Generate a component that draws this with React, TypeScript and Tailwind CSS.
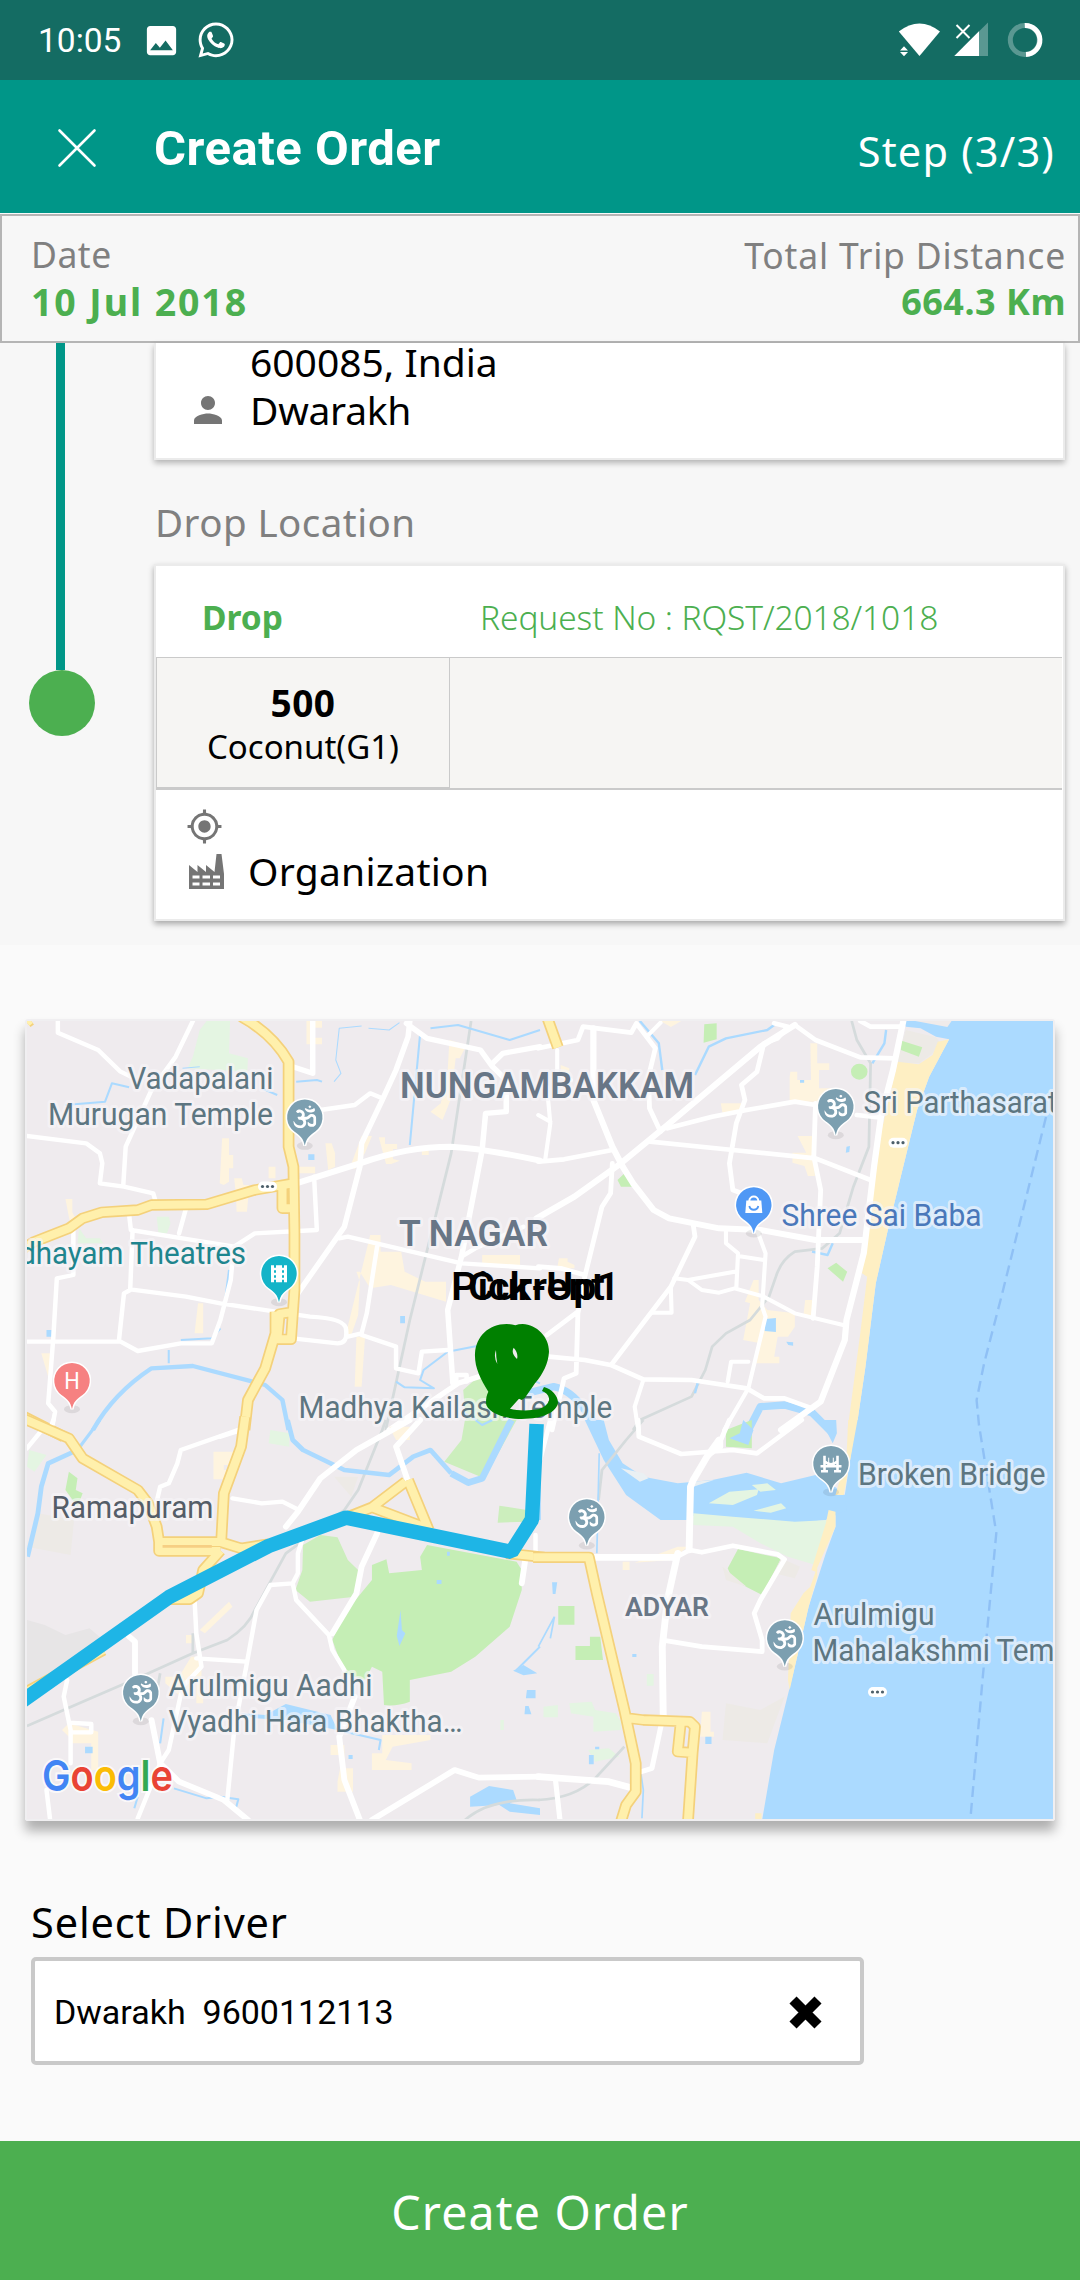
import { ReactNode } from "react";
import { FaOm, FaWhatsapp } from "react-icons/fa";
import { MdImage, MdMyLocation, MdPerson } from "react-icons/md";

type Shape = { d: string; fill: string };
type Line = { d: string; w: number };
type Tile = {
  transform: string;
  areas: Shape[];
  water: Line[];
  rail: string[];
  roads: Line[];
  highways: string[];
  lane?: string;
};

const GREEN = "#c5eeb5";
const MEADOW = "#e4f5e2";
const BLOCK = "#fef4df";
const WATER = "#abdaff";
const SAND = "#feefc3";
const STONE = "#edeae6";

const northWest: Tile = {
  transform: "translate(0 1000) scale(.34439 .33333)",
  areas: [
    { fill: MEADOW, d: "M600 63L668 63L665 160L720 175L718 215L545 205L560 170L580 90ZM455 650h35l5 20-10 30h-25zM230 685l20 30h40l10 15h-75z" },
    { fill: BLOCK, d: "M645 415h20v50h12v40h-12v40l-15 10-12-5zM680 535h22l5 20h15v25l-5 55h-30l-2-50zM780 500h20v35h-20zM890 63h45v20h-25v30h25v20h-45zM945 430h18l10 30v40l-20 10zM1050 408h30l-20 50-30 50-12-10zM1100 412h18v20h35v15h-12v30l20 5-25 10h-15zM1225 445h20v20h-20zM1305 120l50 15-20 40h-12l-13 120-25 65-35-25 30-25 20-100zM1075 705h30v50h60l10 60 60 30 60 0v60l-160-50-60 10-30-50h-10l10 30-5 100-20 60-15-5zM190 597h20v40l10 20-15 20zM575 910h15v90h-25zM120 1060h30v50l-10 20zM1035 1010h25l-10 150h-20zM865 500h50v20h-50zM1400 765h110v30h-110z" },
    { fill: WATER, d: "M895 463h18v17h-18zM1162 948h14v22h-14zM135 990h15v20h-15z" },
    { fill: "#cceebd", d: "M1345 1170L1400 1120L1440 1200L1480 1230L1440 1290H1355Z" },
  ],
  water: [
    { w: 13, d: "M270 1290Q330 1180 440 1105L560 1098L770 1155L820 1200L838 1290" },
    { w: 6, d: "M490 1050V1090M525 1020L615 1015L640 985M665 810L655 890M190 315L305 305L325 250L375 262M760 265L805 285M860 245L920 240L935 245M1220 100L1190 435M1250 85L1330 75L1480 120L1568 90M1150 1145L1175 1162L1260 1165L1220 1140L1230 1110L1300 1055L1400 1035M1440 1200L1520 1130L1568 1150M1350 1240L1400 1270L1440 1260" },
    { w: 3, d: "M1050 78L985 85L975 180L990 220L970 245M1070 85L1130 90L1160 68M530 205L580 200" },
  ],
  rail: ["M1368 63L1310 460L1190 960L1120 1290"],
  roads: [
    { w: 13, d: "M168 63V98L285 150L350 215L380 230M560 63L510 170L440 270L365 440L358 555M78 408L250 430L290 460L297 490L290 550L360 560L445 580L452 605M540 625L520 700M375 645L380 690L530 715L680 740L740 700L920 690L912 530M385 690L378 870L360 880L345 1025M378 868L540 890L640 910L800 935L900 950Q1005 955 1005 990Q1010 1030 980 1030L850 1015M678 745L670 840L640 960L615 1030L525 1030L400 1053L350 1025L78 1025M213 690L213 825L165 835L155 1010L140 1210L160 1235L150 1290M930 330L1030 315L1075 280L1110 295M985 715L1010 710L1340 790L1568 805M1095 740L1065 940L1050 1000L1010 1010M1050 1005L1150 1040L1150 1105L1215 1120L1225 1055L1300 1050M1325 1145v-20h30v20M1340 770L1380 745L1520 680M715 1285L640 1310" },
    { w: 16, d: "M908 63V220L850 200M1190 63L1185 110L1150 210L1110 300L1050 430L1045 500L1000 680L865 880M1180 70L1240 115L1395 150L1430 200L1470 240L1470 335L1410 340L1400 450L1340 770L1300 930L1315 1150M1430 190L1460 160L1568 140M1130 1290L1330 1150L1390 1130" },
    { w: 18, d: "M860 550L1045 490Q1180 440 1310 440Q1400 445 1568 482" },
  ],
  highways: [
    "M700 50Q790 100 838 185L838 440L852 500L855 700L855 870L845 1018H805L812 942L855 935M800 935V1000L770 1105L720 1200L710 1290M60 750L100 725L200 685L240 655L295 637L400 630L440 615L600 613L740 570L850 550M820 560V625H850M60 1245L185 1310M78 68l10-8",
  ],
};

const northEast: Tile = {
  transform: "translate(540 1000) scale(.34439 .33333)",
  areas: [
    { fill: WATER, d: "M1055 63H1500V1290H918L945 1100L975 850L1010 690L1050 520L1095 330L1130 230L1188 118L1150 110L1105 85L1062 80Z" },
    { fill: "#f0ebea", d: "M1090 63H1195L1183 81Z" },
    { fill: STONE, d: "M1062 90L1150 112L1160 125L1140 160L1100 190L1035 190Z" },
    { fill: SAND, d: "M1188 118L1130 230L1095 330L1050 520L1010 690L975 850L945 1100L918 1290H893L930 1000L950 830L935 820L990 400L1038 185L1100 193L1140 165L1155 125Z" },
    { fill: GREEN, d: "M477 73L513 70V118L475 128ZM903 215a24 24 0 1 0 48 0a24 24 0 1 0 -48 0ZM1050 122L1110 142L1100 170L1048 150ZM225 540L250 515L275 560L235 560ZM835 805L860 788L892 815L880 845Z" },
    { fill: BLOCK, d: "M785 130h20v60h35v20h-30v55h45v20l-30 20h-100v-75l2-15h20v25h40zM525 310h60v25l-55 5zM748 408h50v120h-20l-10-30-35-10v-30h40zM620 840h15v60l25 30 80 10v40l-20 30h-30l-10 60h15v20h-75l20-60-50-10 20-110-15-5zM770 900h20v45h-25zM55 775h25v10l20 10v10h-50zM350 63h60l-30 18zM60 195l25 10v20h-25z" },
    { fill: WATER, d: "M655 957l30 -3v42l-33-3zM715 1025l20 2v10l-14-2zM890 440l10-2-2 18-10 2zM755 240h12v8h-12z" },
  ],
  water: [
    { w: 7, d: "M290 63L345 130L355 210M450 225L490 140L540 115L660 90L680 75M1005 90L1000 130L965 190M850 730L835 765L790 755M460 1140l-10 40" },
    { w: 22, d: "M-40 1180L40 1160Q90 1170 130 1230L180 1300M600 1300L640 1220L710 1215L790 1238L850 1300" },
  ],
  rail: ["M905 63L920 120L960 190L955 440L910 560L870 700L820 745L740 755Q700 780 685 830L665 890L610 960L540 1000L500 1040L480 1110L440 1190L290 1260L270 1290"],
  roads: [
    { w: 18, d: "M-10 655L100 590L235 490L370 375L640 140L740 75M1055 63L1025 210L990 350L970 500L940 760L890 960L885 1020L815 1205L700 1290M155 85V300L210 440L240 500L270 550L330 630L375 655L520 685L640 690L800 720L940 720" },
    { w: 14, d: "M-5 145L110 120L125 80L265 98L280 70L335 145L315 230L318 325L350 395M-5 485L70 478L210 450M320 425L560 450L800 475L960 540M370 385L500 350L600 330L740 305L800 315M680 70L720 80L690 115L650 130L630 215L585 255L595 300L570 370L550 490L560 570L600 585M740 75L800 120L930 172L1030 175M930 63L960 80L1050 80M800 310L795 470L815 570L805 800L793 955M920 345L985 352M445 675L450 710L380 860L210 1090M210 490L205 580L180 620L130 830L110 940L105 1120L70 1135L35 1290M-5 800L60 805L130 825M20 1005L110 935M25 1070L130 1080L205 1095L300 1138L440 1140L600 1165L650 1195L710 1195L790 1225" },
    { w: 12, d: "M630 690L655 760L645 920L655 950L605 1165L535 1290M540 690V730L575 760L570 865M575 768L650 780M390 835L430 840L565 815M430 840L470 870L520 878L565 865L650 890L740 940L880 975M380 865L382 938H325M300 1140L275 1220L285 1290M545 1145L555 1085H605M50 150V220L90 240M20 260L30 370L15 480M-5 345L30 365M310 110L350 68" },
  ],
  highways: ["M20 50L52 142"],
};

const southWest: Tile = {
  transform: "translate(0 1420) scale(.34439 .33333)",
  areas: [
    { fill: "#e7e5e6", d: "M78 600L130 615L190 645L260 625L300 660L78 800Z" },
    { fill: STONE, d: "M110 280L215 300L205 405L78 380ZM970 170h70l-20 60z" },
    { fill: "#cceebd", d: "M880 375L930 345L980 352L1010 420L1045 455L1030 530L900 545L858 510L878 450Z" },
    { fill: GREEN, d: "M1240 375L1500 425L1515 450L1515 510L1480 620L1380 710L1310 755L1190 780V845Q1150 860 1115 855L1110 755L1080 740L1060 780L1000 760L965 660L1000 580L1040 530L1080 480V435L1122 418L1130 460L1225 450L1220 410Z" },
    { fill: "#cceebd", d: "M1350 0H1500L1420 150L1395 170L1290 125L1340 60ZM1450 257L1530 270V305L1445 308Z" },
    { fill: GREEN, d: "M200 155L225 175L220 210L240 220L225 260L190 210Z" },
    { fill: MEADOW, d: "M785 30L840 40V80L780 70ZM85 90L135 105L100 155L78 140ZM1453 900h10v30h-10z" },
    { fill: BLOCK, d: "M620 95h60v40h-30v15h10v28h-40v-50zM665 545l10 15-80 80-15-10zM540 645h20v25h-20zM555 710h30v60l-60 60-45-40v-20h40zM180 930l20-20 85 25v115h-20v-80h-65v-20zM960 975h40v70h25v70h-45v-30l15-80h-35zM1110 945h140v15l-110 20-20 40 75 10v20h-115v-50h30zM570 780h20v70h-20zM1130 20h60v40h-40z" },
    { fill: WATER, d: "M1490 752L1520 735L1560 760L1520 766ZM1530 810h25v25h-28zM1525 858h10l8 25h-20zM1365 1130L1420 1098L1490 1110L1500 1140L1480 1150L1568 1165V1185L1480 1175L1450 1155L1365 1160ZM700 880L770 885L830 852L960 885L980 930L830 900L740 895ZM247 980h22v20h-22zM1012 1005h12v12h-12zM1163 570l4 60 10 10-17 38-8-30zM1268 480h14v12h-14zM1298 395h8v12h-8z" },
  ],
  water: [
    { w: 9, d: "M290 0L225 90" },
    { w: 14, d: "M225 90L140 130L120 200L110 280L80 410" },
    { w: 14, d: "M835 0L850 60L880 90L1000 150L1130 165L1200 110L1250 90L1310 160" },
    { w: 20, d: "M1310 160L1360 188L1400 175L1485 0" },
    { w: 6, d: "M1568 680L1500 750M980 930L1105 960L1100 990M475 895L465 970M505 1105L600 1135L640 1130L692 1138L685 1165M1380 0L1400 15L1430 0M400 1130L390 1165" },
  ],
  rail: ["M78 918L240 845L420 765L560 700L660 660Q720 620 740 570L830 400L1000 270L1040 210L1110 30L1120 0M1350 1200Q1420 1135 1568 1140M465 760l-10 60M560 700V640"],
  roads: [
    { w: 13, d: "M705 25L525 90L515 130L490 190L465 200L455 245M118 35L78 85M155 0L148 20M675 235L760 250L820 245L868 270M880 350L865 400V460L850 490L860 540L955 645L965 690L1000 750M850 490L785 495L745 570L715 740L680 930L660 1140M715 725L570 715M565 540L570 640L585 740L530 800L490 990L465 1030M195 780L185 830L205 930L205 1030M200 908L265 912V937H205M465 1030L400 1195M135 1110L145 1195M1555 345V400" },
    { w: 17, d: "M1190 0L1035 90L930 175L865 275L830 320M1220 0L1150 80L1185 185M1095 340L1050 440L1035 520L965 640M375 650L392 665V760M440 900L465 1030L520 1085L650 1140L720 1200M1030 830L985 950L1000 1080L1045 1200M1080 1200L1320 1050L1390 1073L1568 1070M1525 420L1515 490" },
  ],
  highways: [
    "M60 -8L200 55L240 115L400 210L430 250L455 320L462 366H640L700 385L780 372M462 360V393H640M712 -10L700 80L650 220L642 370M640 392L590 450L575 520L550 538H490M1178 185L1080 262L1000 295M1185 180L1245 330M1080 262L1240 325M1470 400L1580 412M60 825L300 690",
  ],
  lane: "M472 379H615",
};

const southEast: Tile = {
  transform: "translate(540 1420) scale(.34439 .33333)",
  areas: [
    { fill: WATER, d: "M918 0H1500V1200H645L680 990L740 740L780 560L830 400L858 320L858 280L850 270L838 275L860 225L885 225Z" },
    { fill: WATER, d: "M130 0H185L200 60L240 130L300 170L400 190L500 180L600 158L700 190L800 165L850 195L885 225L890 270L830 300L740 310L450 285L430 300H350L250 225L185 120ZM800 0H860L862 40L850 70L830 30Z" },
    { fill: MEADOW, d: "M490 250L550 215L635 208L630 225L560 255ZM620 272L700 250L715 265L670 278ZM615 195L660 190L685 210L640 215ZM445 280L560 290L740 305L840 300L800 435L720 410L640 370L560 320L445 315Z" },
    { fill: "#eaf0f3", d: "M235 145L300 160L315 175L290 185ZM445 185l60-5-60 20z" },
    { fill: GREEN, d: "M540 30L615 0V85L540 80ZM575 387L700 415L645 525L560 480L545 445ZM53 558h47v56h-47zM145 650h30l8 70h-80v-42h42z" },
    { fill: WATER, d: "M590 0L620 30L605 75L550 55L580 40Z" },
    { fill: SAND, d: "M895 0H922L882 225H858L890 110ZM838 270L858 275V320L800 455L788 450L830 310ZM805 440V470L780 560L740 740L725 810L720 780L728 580L765 520L785 500ZM625 1180h18v20h-18z" },
    { fill: STONE, d: "M540 850L640 870L710 830L660 970L530 960ZM700 415L755 440L740 475L680 460ZM530 440L600 500L540 480Z" },
    { fill: BLOCK, d: "M470 875h25v60h10v15h-40zM240 425h20v25h-20zM275 428L400 380H430L380 420Z" },
    { fill: MEADOW, d: "M310 762h20v35h-20zM85 850L150 845L160 870L220 880L235 905V930L155 935V890L90 880ZM10 860l42-5v37h-42zM140 990L200 985L230 1010L160 1025Z" },
    { fill: WATER, d: "M480 950h18v22h-18zM142 1005h14v28h-14zM35 487h15l-5 35h-8zM268 702h12v9h-12zM160 980h12v8h-12z" },
  ],
  water: [
    { w: 5, d: "M42 590L-5 680M42 590L30 655M172 100L165 400M215 740L255 880M290 1040L300 1110L296 1195M0 60V300" },
  ],
  rail: ["M300 0L250 60L180 150L170 240M245 980L160 1075Q100 1135 -5 1140"],
  roads: [
    { w: 14, d: "M285 0L287 50L410 102L560 90L630 100L760 0M550 0L525 60V80L485 110M390 415L435 390L470 397L560 377L690 403L710 418L640 540L622 580L645 660V695L470 680L365 662M30 0L0 120" },
    { w: 20, d: "M520 60L485 110L445 180L437 200L433 390M155 412H390M400 400L370 540L355 680L358 900M-5 1070L130 1080L200 1085L265 1103" },
    { w: 15, d: "M355 900L325 1045L285 1058M45 1080L58 1200" },
  ],
  highways: ["M-20 412H142L165 520L245 870L278 1030L278 1115L250 1155L235 1205M245 893L300 900L435 905L450 920L443 1000L430 1200M408 915L400 995L440 998"],
};

function MapTile({ t }: { t: Tile }) {
  return (
    <g transform={t.transform} fill="none" strokeLinejoin="round">
      {t.areas.map((a, i) => (
        <path key={i} d={a.d} fill={a.fill} />
      ))}
      {t.rail.map((d, i) => (
        <path key={i} d={d} stroke="#d5dbdc" strokeWidth={8} />
      ))}
      {t.water.map((l, i) => (
        <path key={i} d={l.d} stroke={WATER} strokeWidth={l.w} />
      ))}
      {t.roads.map((l, i) => (
        <path key={i} d={l.d} stroke="#fff" strokeWidth={l.w} strokeLinecap="round" />
      ))}
      {t.highways.map((d, i) => (
        <path key={i} d={d} stroke="#f4d17b" strokeWidth={34} />
      ))}
      {t.highways.map((d, i) => (
        <path key={i} d={d} stroke="#fff0ac" strokeWidth={24} />
      ))}
      {t.lane && <path d={t.lane} stroke="#f6cf83" strokeWidth={8} />}
    </g>
  );
}

function Pin({ x, y, color, children }: { x: number; y: number; color: string; children: ReactNode }) {
  return (
    <g transform={`translate(${x} ${y})`}>
      <ellipse cx="0" cy="28.5" rx="8" ry="4" fill="#000" opacity=".08" />
      <path
        d="M0 28.5C-1.4 21-4.5 18.5-10.5 14.2A17.7 17.7 0 1 1 10.5 14.2C4.5 18.5 1.4 21 0 28.5Z"
        fill={color}
        stroke="#fff"
        strokeWidth="3"
        paintOrder="stroke"
      />
      {children}
    </g>
  );
}

const OmGlyph = () => <FaOm x={-11.5} y={-12} width={23} height={23} size={23} color="#fff" />;

const omPins = [
  [304.8, 1117.3],
  [835.8, 1106.7],
  [140.8, 1692.7],
  [586.8, 1517],
  [784.8, 1638],
];

type Label = { t: string; x: number; y: number; w?: number; c: string; s?: number; b?: boolean; end?: boolean };

const SLATE = "#5d7681";
const labels: Label[] = [
  { t: "Vadapalani", x: 127.4, y: 1089, w: 146, c: SLATE },
  { t: "Murugan Temple", x: 48, y: 1124.7, w: 225, c: SLATE },
  { t: "NUNGAMBAKKAM", x: 400, y: 1097.7, w: 294, c: "#687686", s: 36.5, b: true },
  { t: "T NAGAR", x: 399, y: 1246, w: 149, c: "#687686", s: 36, b: true },
  { t: "Udhayam Theatres", x: 246, y: 1264, w: 246, c: "#1f858e", end: true },
  { t: "Madhya Kailash Temple", x: 298.6, y: 1417.7, w: 313.5, c: SLATE },
  { t: "Sri Parthasarathy", x: 863.5, y: 1112.7, w: 224, c: SLATE },
  { t: "Shree Sai Baba", x: 781.5, y: 1225.7, w: 200, c: "#4a78ba" },
  { t: "Ramapuram", x: 51.5, y: 1518, w: 162, c: "#545d68" },
  { t: "Arulmigu Aadhi", x: 168.5, y: 1696, w: 204, c: SLATE },
  { t: "Vyadhi Hara Bhaktha…", x: 168.5, y: 1731.7, w: 294, c: SLATE },
  { t: "Broken Bridge", x: 858, y: 1484.7, w: 187.5, c: SLATE },
  { t: "ADYAR", x: 625, y: 1615.7, w: 84, c: "#687686", s: 26.7, b: true },
  { t: "Arulmigu", x: 813.5, y: 1625.3, w: 121, c: SLATE },
  { t: "Mahalakshmi Temple", x: 812.5, y: 1661.3, w: 281.5, c: SLATE },
];

const dots = [
  [267.5, 1186.5],
  [898, 1142.7],
  [877.5, 1692],
];

function TripMap() {
  return (
    <svg viewBox="27 1021 1026 798" className="block h-[798px] w-[1026px] font-[Roboto,sans-serif]">
      <rect x="27" y="1021" width="1026" height="798" fill="#efebee" />
      <MapTile t={northWest} />
      <MapTile t={northEast} />
      <MapTile t={southWest} />
      <MapTile t={southEast} />
      <path
        d="M1046 1117L1025.5 1200L1001.4 1296.7L984.2 1363L976.6 1400L979 1425L996.3 1533L982.5 1680L970.4 1819"
        fill="none"
        stroke="#8fc0f5"
        strokeWidth="2.4"
        strokeDasharray="11 6"
      />
      <path
        d="M18 1704L168.7 1597.3L268.6 1546L346 1517.6L511.4 1552L532 1519.5L536.6 1424"
        fill="none"
        stroke="#1eb5e6"
        strokeWidth="14.5"
        strokeLinejoin="bevel"
      />
      {omPins.map(([x, y]) => (
        <Pin key={x} x={x} y={y} color="#7c9fb0">
          <OmGlyph />
        </Pin>
      ))}
      <Pin x={753.8} y={1205} color="#4f98f5">
        <path d="M-7.500-4.500H7.500L8.500 8H-8.500Z" fill="#fff" />
        <path d="M-4.500-4C-4.500-10 4.500-10 4.500-4" fill="none" stroke="#fff" strokeWidth="2" />
        <path d="M-4.500 1C-3.500 6 3.500 6 4.500 1" fill="none" stroke="#4f98f5" strokeWidth="1.800" />
      </Pin>
      <Pin x={279} y={1273.7} color="#14b4c8">
        <path d="M-8-8.500h3v2.500h2v-2.500h6v2.500h2v-2.500h3v17h-3v-2.500h-2v2.500h-6v-2.500h-2v2.500h-3zM-5-3.500v2.500h2v-2.500zM-5 1.500v2.500h2v-2.500zM3-3.500v2.500h2v-2.500zM3 1.500v2.500h2v-2.500z" fill="#fff" fillRule="evenodd" />
      </Pin>
      <Pin x={72} y={1380.7} color="#f68181">
        <text x="0" y="8.300" fontSize="23" textAnchor="middle" fill="#fff" textLength="15.500" lengthAdjust="spacingAndGlyphs">H</text>
      </Pin>
      <Pin x={831} y={1463.7} color="#7c9fb0">
        <path d="M-6.500-8V8M6.500-8V8M-10.500 2.500H10.500M-10 7.500h7M3 7.500h7M-6.500-2.500Q0 4 6.500-2.500" fill="none" stroke="#fff" strokeWidth="2.600" />
        <path d="M-2.300-6V2M2.300-6V2" fill="none" stroke="#fff" strokeWidth="1" />
      </Pin>
      {dots.map(([x, y]) => (
        <g key={x}>
          <rect x={x - 9.5} y={y - 5} width="19" height="10" rx="5" fill="#fff" />
          <circle cx={x - 5} cy={y} r="1.600" fill="#4d5f69" />
          <circle cx={x} cy={y} r="1.600" fill="#4d5f69" />
          <circle cx={x + 5} cy={y} r="1.600" fill="#4d5f69" />
        </g>
      ))}
      {labels.map((l) => (
        <text
          key={l.t}
          x={l.x}
          y={l.y}
          fill={l.c}
          fontSize={l.s ?? 32}
          fontWeight={l.b ? 600 : 400}
          textAnchor={l.end ? "end" : "start"}
          textLength={l.w}
          lengthAdjust="spacingAndGlyphs"
          stroke="#f7f6f9"
          strokeOpacity=".65"
          strokeWidth="6"
          strokeLinejoin="round"
          paintOrder="stroke"
        >
          {l.t}
        </text>
      ))}
      <text
        x="42"
        y="1791"
        fontSize="43"
        fontWeight="600"
        textLength="131"
        lengthAdjust="spacingAndGlyphs"
        stroke="#fff"
        strokeOpacity=".7"
        strokeWidth="4"
        paintOrder="stroke"
        className="font-[Inter,sans-serif]"
      >
        <tspan fill="#4285f4">G</tspan>
        <tspan fill="#e94335">o</tspan>
        <tspan fill="#fbbc05">o</tspan>
        <tspan fill="#4285f4">g</tspan>
        <tspan fill="#34a853">l</tspan>
        <tspan fill="#e94335">e</tspan>
      </text>
      <g fontSize="39.500" fontWeight="600" fill="#000">
        <text x="451" y="1299.700" textLength="169" lengthAdjust="spacingAndGlyphs">Pick-Up1</text>
        <text x="468" y="1299.700" textLength="137" lengthAdjust="spacingAndGlyphs">Current</text>
      </g>
      <path
        transform="translate(400 1240) scale(.33333)"
        fill="#008000"
        fillRule="evenodd"
        d="M265 455C240 415 223 380 225 340C228 290 265 252 320 252Q336 252 346 256Q356 252 368 252C410 254 447 290 447 335C445 370 430 400 405 430L375 473L365 480L357 476L330 506C350 512 385 513 415 508C440 500 449 485 447 475C445 464 437 457 426 453L432 441C455 446 474 468 474 487C472 515 430 537 365 537C310 537 258 515 258 488C258 475 260 465 265 455ZM288 330Q280 352 292 372Q288 352 288 330ZM341 323Q332 340 351 357Q356 340 341 323Z"
      />
    </svg>
  );
}

function SystemIcons() {
  return (
    <svg viewBox="896 20 150 40" className="h-[40px] w-[150px]">
      <path d="M898.800 31.500Q919.500 15.500 940 31.500L919.500 56Z" fill="#fff" />
      <path d="M900 50.500L904 46.300L908 50.500ZM900 52L904 56.200L908 52Z" fill="#fff" />
      <path d="M954.300 56L988 22.500V56Z" fill="#fff" opacity=".3" />
      <path d="M954.300 56L979 31.300V56Z" fill="#fff" />
      <path d="M956.500 25L969.500 38M969.500 25L956.500 38" stroke="#146c63" strokeWidth="5" />
      <path d="M956.500 25L969.500 38M969.500 25L956.500 38" stroke="#fff" strokeWidth="2" />
      <circle cx="1024.800" cy="40" r="14.500" fill="none" stroke="#fff" strokeOpacity=".3" strokeWidth="5" />
      <path d="M1024.800 25.500A14.500 14.500 0 0 1 1026 54.500" fill="none" stroke="#fff" strokeWidth="5" />
    </svg>
  );
}

function FactoryIcon() {
  return (
    <svg viewBox="0 0 35 35" className="h-[35px] w-[35px]" fill="#757575">
      <path
        fillRule="evenodd"
        d="M0 11L8.500 18V11L17 18V11L25.500 18L27.500 0H32.500L35 20V35H0ZM3.500 21.500V24.500H10.500V21.500ZM13.500 21.500V24.500H21V21.500ZM24 21.500V24.500H31V21.500ZM3.500 28.500V31.500H10.500V28.500ZM13.500 28.500V31.500H21V28.500ZM24 28.500V31.500H31V28.500Z"
      />
    </svg>
  );
}

export default function App() {
  return (
    <div className="flex h-[2280px] w-[1080px] flex-col overflow-hidden bg-[#fafafa] font-['Noto_Sans',sans-serif] text-black">
      <div className="flex h-[80px] shrink-0 items-center bg-[#146c63] pl-[38px] font-[Roboto,sans-serif] text-white">
        <span className="w-[104px] pt-[2px] text-[33.5px] leading-[80px]">10:05</span>
        <MdImage size={39} className="shrink-0" />
        <FaWhatsapp size={40} className="ml-[15px] shrink-0" />
        <div className="mr-[34px] ml-auto">
          <SystemIcons />
        </div>
      </div>

      <header className="flex h-[133px] shrink-0 items-center bg-[#009688] pr-[25px] pl-[57px] text-white">
        <svg viewBox="0 0 40 40" className="mt-[2px] h-[40px] w-[40px]" fill="none" stroke="#fff" strokeWidth="2.6" strokeLinecap="round">
          <path d="M2.500 2.500L37.500 37.500M37.500 2.500L2.500 37.500" />
        </svg>
        <h1 className="ml-[57px] pt-[5px] font-[Roboto,sans-serif] text-[49px] leading-[60px] font-bold tracking-[0.5px]">Create Order</h1>
        <span className="ml-auto pt-[9px] text-[41.500px] leading-[60px] tracking-[1.200px]">Step (3/3)</span>
      </header>

      <section className="mt-px flex h-[129px] shrink-0 justify-between border-2 border-[#b5b5b5] bg-[#f7f7f7] pt-[14px] pr-[12px] pl-[29px]">
        <div>
          <div className="text-[35.500px] leading-[48px] tracking-[0.500px] text-[#808080]">Date</div>
          <div className="text-[37.500px] leading-[48px] font-bold tracking-[1.900px] text-[#4caf50]">10 Jul 2018</div>
        </div>
        <div className="pt-[1px] text-right">
          <div className="text-[35.500px] leading-[48px] tracking-[0.800px] text-[#808080]">Total Trip Distance</div>
          <div className="text-[36px] leading-[46px] font-bold tracking-[0.500px] text-[#4caf50]">664.3 Km</div>
        </div>
      </section>

      <section className="flex h-[602px] shrink-0 bg-[#f7f7f7] pr-[15px]">
        <div className="flex w-[154px] shrink-0 flex-col pl-[29px]">
          <div className="ml-[27px] h-[327px] w-[9px] bg-[#009688]" />
          <div className="size-[66px] rounded-full bg-[#4caf50]" />
        </div>
        <div className="flex-1">
          <div className="flex h-[117px] flex-col border-2 border-t-0 border-[#ebebeb] bg-white pl-[31px] shadow-[0_3px_6px_rgba(0,0,0,0.28)]">
            <div className="pl-[63px] text-[39px] leading-[38px]">600085, India</div>
            <div className="mt-[5px] flex h-[48px] items-center">
              <MdPerson size={42} color="#757575" />
              <span className="ml-[21px] text-[39px] leading-[48px] tracking-[-0.300px]">Dwarakh</span>
            </div>
          </div>
          <h2 className="mt-[38px] h-[66px] pl-[1px] text-[38.500px] leading-[48px] tracking-[0.450px] text-[#808080]">Drop Location</h2>
          <div className="h-[357px] border-2 border-[#ebebeb] bg-white shadow-[0_3px_6px_rgba(0,0,0,0.32)]">
            <div className="flex h-[91px] pt-[27px] pl-[46px] text-[33.500px] leading-[48px] text-[#4caf50]">
              <span className="w-[278px] font-bold">Drop</span>
              <span className="font-light tracking-[-0.100px]">Request No : RQST/2018/1018</span>
            </div>
            <div className="mr-[1px] flex h-[133px] border-t border-b-2 border-[#cacaca] bg-[#f6f5f3]">
              <div className="h-full w-[294px] border-x border-b border-[#cacaca] pt-[21px] text-center">
                <div className="text-[37px] leading-[48px] font-bold tracking-[0.500px]">500</div>
                <div className="text-[33px] leading-[40px]">Coconut(G1)</div>
              </div>
            </div>
            <div className="pt-[18px] pl-[30px]">
              <MdMyLocation size={37} color="#757575" className="block" />
              <div className="mt-[8px] flex h-[36px] items-center">
                <div className="ml-[3px]">
                  <FactoryIcon />
                </div>
                <span className="ml-[24px] text-[39px] leading-[48px] tracking-[0.250px]">Organization</span>
              </div>
            </div>
          </div>
        </div>
      </section>

      <div className="mt-[74px] ml-[25px] h-[802px] w-[1030px] shrink-0 overflow-visible rounded-[3px] border-2 border-[#f0eff1] shadow-[0_10px_12px_rgba(0,0,0,0.3)]">
        <TripMap />
      </div>

      <section className="flex-1 pt-[74px] pl-[31px]">
        <label className="block h-[62px] text-[41.500px] leading-[54px] tracking-[0.850px]">Select Driver</label>
        <div className="flex h-[108px] w-[833px] items-center justify-between rounded-[5px] border-[4px] border-[#c9c9c9] bg-white pr-[38px] pl-[19px]">
          <span className="pt-[1px] font-[Roboto,sans-serif] text-[34px] leading-[48px] whitespace-pre">{"Dwarakh  9600112113"}</span>
          <svg viewBox="0 0 33 33" className="mt-[2px] h-[33px] w-[33px]" fill="none" stroke="#000" strokeWidth="10">
            <path d="M4 4L29 29M29 4L4 29" />
          </svg>
        </div>
      </section>

      <button className="h-[139px] shrink-0 bg-[#4caf50] pt-[2px] text-center text-[46.500px] leading-[60px] tracking-[1.150px] text-white">Create Order</button>
    </div>
  );
}
